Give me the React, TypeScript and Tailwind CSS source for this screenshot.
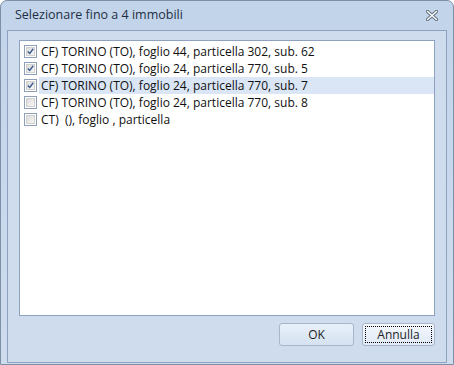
const items = [
  { label: "CF) TORINO (TO), foglio 44, particella 302, sub. 62", checked: true, selected: false },
  { label: "CF) TORINO (TO), foglio 24, particella 770, sub. 5", checked: true, selected: false },
  { label: "CF) TORINO (TO), foglio 24, particella 770, sub. 7", checked: true, selected: true },
  { label: "CF) TORINO (TO), foglio 24, particella 770, sub. 8", checked: false, selected: false },
  { label: "CT)  (), foglio , particella", checked: false, selected: false },
];

function CheckBox({ checked }: { checked: boolean }) {
  return (
    <div className="w-[13px] h-[13px] border border-[#8f9fb5] bg-white p-[1px] shrink-0">
      <div className="w-full h-full bg-gradient-to-br from-[#dcdcdc] to-[#f6f6f6] border border-[#d0d0d0] flex items-center justify-center">
        {checked && (
          <svg width="9" height="9" viewBox="0 0 9 9">
            <path d="M1 4.5 L3.5 7 L8 1" fill="none" stroke="#3c5b8f" strokeWidth="1.8" />
          </svg>
        )}
      </div>
    </div>
  );
}

export default function App() {
  return (
    <div
      className="w-[454px] h-[365px] bg-white text-[12px]"
      style={{ fontFamily: '"Open Sans", "Noto Sans", sans-serif' }}
    >
      <div className="w-full h-full rounded-t-[7px] border border-[#7d8ea6] bg-gradient-to-b from-[#c2d4ea] to-[#cfdcee] flex flex-col">
        <div className="h-[29px] flex items-center justify-between pl-[14px] pr-[15px] shrink-0">
          <span className="text-[#1e2f45] text-[12.5px]">Selezionare fino a 4 immobili</span>
          <svg width="12" height="11" viewBox="0 0 12 11">
            <path d="M1.5 1.5 L10.5 9.5 M10.5 1.5 L1.5 9.5" stroke="#5f6c7e" strokeWidth="3.2" strokeLinecap="round" />
            <path d="M1.5 1.5 L10.5 9.5 M10.5 1.5 L1.5 9.5" stroke="#ffffff" strokeWidth="1.4" strokeLinecap="round" />
          </svg>
        </div>
        <div className="flex-1 mx-[6px] mb-[1px] border border-[#8ea2c0] bg-[#cfdcee] flex flex-col px-[11px] pt-[9px] pb-[16px]">
          <div className="flex-1 bg-white border border-[#8ea2c0] pt-[2px]">
            {items.map((it, i) => (
              <div key={i} className="h-[17px] flex items-center pl-[2px]">
                <div className="w-[17px] flex justify-center">
                  <CheckBox checked={it.checked} />
                </div>
                <div
                  className={`flex-1 h-full flex items-center pl-[2px] text-[#101010] whitespace-pre ${
                    it.selected ? "bg-[#dae6f6]" : ""
                  }`}
                >
                  {it.label}
                </div>
              </div>
            ))}
          </div>
          <div className="flex justify-end gap-[8px] pt-[7px]">
            <button className="w-[75px] h-[23px] rounded-[3px] border border-[#a9b6c9] bg-gradient-to-b from-[#e8f0fa] to-[#d6e2f1] text-[#1e1e1e] text-[12px]">
              OK
            </button>
            <button className="w-[73px] h-[23px] rounded-[3px] border border-[#a9b6c9] bg-gradient-to-b from-[#f4f8fd] to-[#e0e9f5] p-[2px]">
              <div className="w-full h-full border border-dotted border-black flex items-center justify-center text-[#1e1e1e] text-[12px]">
                Annulla
              </div>
            </button>
          </div>
        </div>
      </div>
    </div>
  );
}
